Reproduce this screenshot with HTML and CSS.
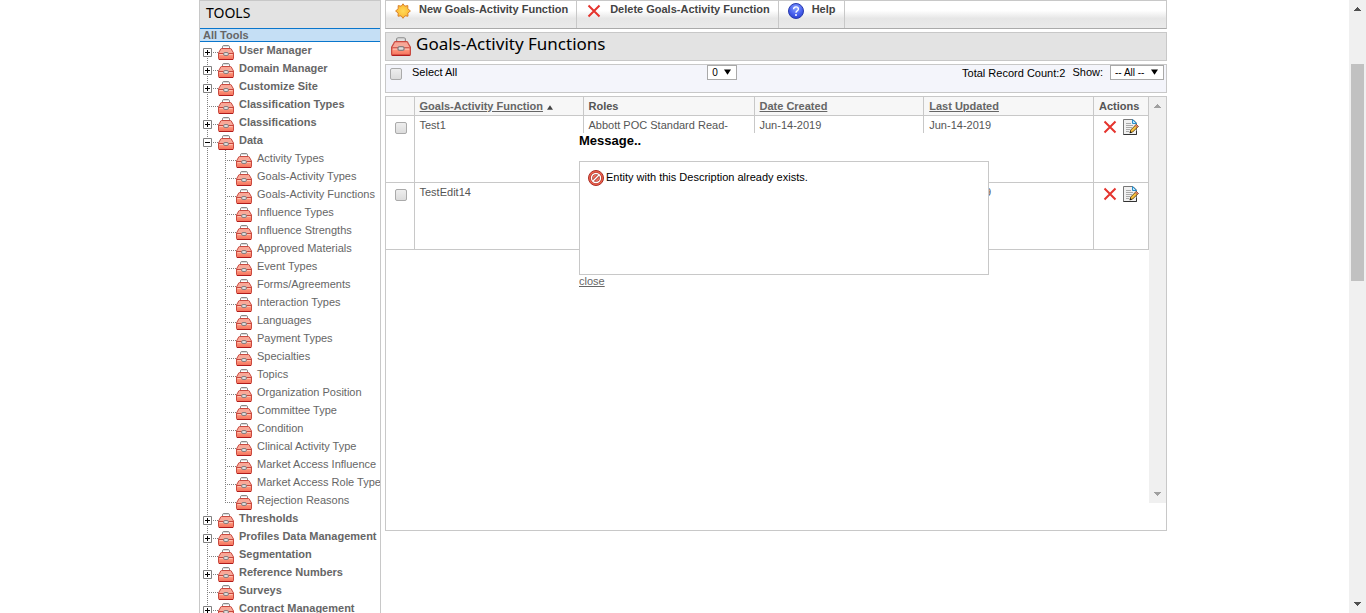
FILE: index.html
```html
<!DOCTYPE html>
<html lang="en">
<head>
<meta charset="utf-8">
<title>Goals-Activity Functions</title>
<link rel="stylesheet" href="styles.css">
</head>
<body>
<svg class="defs" aria-hidden="true">
  <defs>
    <linearGradient id="red" x1="0" y1="0" x2="0" y2="1"><stop offset="0" stop-color="#f9a594"/><stop offset=".4" stop-color="#f7ab9b"/><stop offset=".55" stop-color="#ff9a80"/><stop offset="1" stop-color="#f4705a"/></linearGradient>
    <radialGradient id="blue" cx=".5" cy=".3" r=".7"><stop offset="0" stop-color="#8ba4ff"/><stop offset=".6" stop-color="#4a62ee"/><stop offset="1" stop-color="#2a3fd0"/></radialGradient>
    <radialGradient id="gold"><stop offset="0" stop-color="#ffd95a"/><stop offset="1" stop-color="#fdb92e"/></radialGradient>
    <symbol id="toolbox" viewBox="0 0 16 16">
      <path d="M4.500 5V3Q4.500 1.500 6 1.500H10Q11.500 1.500 11.500 3V5" fill="none" stroke="#8a8a8a"/>
      <path d="M5 2.500H11" stroke="#ddd"/>
      <path d="M3.500 4.500H12.500Q13.300 4.500 13.800 6L15.500 9V14.500Q15.500 15.500 14.500 15.500H1.500Q.5 15.500 .5 14.500V9L2.200 6Q2.700 4.500 3.500 4.500Z" fill="url(#red)" stroke="#c94a40"/>
      <path d="M1 15.500H15" stroke="#b01c1c"/>
      <path d="M1 9.500H15" stroke="#c9473d"/><path d="M1.500 10.500H14.500" stroke="#ffc0b0"/>
      <rect x="5.500" y="8.500" width="5" height="3" rx="1.500" fill="#ddd" stroke="#8a7c7c"/>
    </symbol>
    <symbol id="cross" viewBox="0 0 16 16"><path d="M2.500 2.500L13.500 13.500M13.500 2.500L2.500 13.500" stroke="#e5342e" stroke-width="2" fill="none"/></symbol>
    <symbol id="star" viewBox="0 0 16 16"><path d="M8 .8L9.800 3.200L12.800 2.600L12.800 5.700L15.400 8L12.800 10L13 13.200L9.900 12.800L8 15.300L6.100 12.800L3 13.200L3.200 10L.6 8L3.200 5.700L3.200 2.600L6.200 3.200Z" fill="url(#gold)" stroke="#d9822b" stroke-linejoin="round"/></symbol>
    <symbol id="help" viewBox="0 0 16 16"><circle cx="8" cy="8" r="7.500" fill="url(#blue)" stroke="#2a3cae"/><path d="M5.600 6.200Q5.700 3.900 8 3.900T10.400 6Q10.400 7.100 9.200 7.800T8 9.800" fill="none" stroke="#fff" stroke-width="1.400"/><circle cx="8" cy="12" r="1" fill="#fff"/></symbol>
    <symbol id="deny" viewBox="0 0 16 16"><circle cx="8" cy="8" r="7.500" fill="#f0614d" stroke="#a83028"/><circle cx="8" cy="8" r="4.500" fill="#ee7261" stroke="#a02a20" stroke-width="2.600"/><path d="M5 11L11 5" stroke="#a02a20" stroke-width="2.600"/><circle cx="8" cy="8" r="4.500" fill="none" stroke="#fff" stroke-width="1.400"/><path d="M5 11L11 5" stroke="#fff" stroke-width="1.400"/></symbol>
    <symbol id="edit" viewBox="0 0 16 16">
      <path d="M.5 .5H10L13.500 4V15.500H.5Z" fill="#f1f1f1" stroke="#777"/><path d="M.5 15.500H13.500V12" fill="none" stroke="#333"/>
      <path d="M9.500 .5V4.500H13.500Z" fill="#bfe6fb" stroke="#2b8fcb"/>
      <path d="M3 4.500H8M3 6.500H10M3 8.500H9M3 10.500H7M3 12.500H6" stroke="#aaa"/>
      <path d="M7 13.800L7.700 11L13.200 5.500L15.200 7.500L9.700 13Z" fill="#f9c13c" stroke="#5b4213" stroke-width=".9"/>
      <path d="M12.200 6.500L13.300 5.400L15.300 7.400L14.200 8.500Z" fill="#e88974" stroke="#8a3a2a" stroke-width=".5"/><path d="M6.600 14.200L7.400 12L8.800 13.400Z" fill="#111"/>
    </symbol>
    <symbol id="plus" viewBox="0 0 9 9"><path d="M.5 .5H8.500V8.500H.5Z" fill="#fff" stroke="#808080"/><path d="M2 4.500H7M4.500 2V7" stroke="#000"/></symbol>
    <symbol id="minus" viewBox="0 0 9 9"><path d="M.5 .5H8.500V8.500H.5Z" fill="#fff" stroke="#808080"/><path d="M2 4.500H7" stroke="#000"/></symbol>
    <symbol id="up" viewBox="0 0 7 4"><path d="M3 0H4V1H5V2H6V3H7V4H0V3H1V2H2V1H3Z"/></symbol>
    <symbol id="down" viewBox="0 0 7 4"><path d="M0 0H7V1H6V2H5V3H4V4H3V3H2V2H1V1H0Z"/></symbol>
    <symbol id="caret" viewBox="0 0 8 6"><path d="M0 0H8L4 6Z"/></symbol>
  </defs>
</svg>

<div class="page">
  <nav class="sidebar" aria-label="Tools">
    <h2 class="sidebar-title">TOOLS</h2>
    <a class="all-tools" href="#">All Tools</a>
    <ul class="tree">
      <li><button class="toggle" aria-label="Expand"><svg><use href="#plus"/></svg></button><a href="#"><svg class="icon"><use href="#toolbox"/></svg>User Manager</a></li>
      <li><button class="toggle" aria-label="Expand"><svg><use href="#plus"/></svg></button><a href="#"><svg class="icon"><use href="#toolbox"/></svg>Domain Manager</a></li>
      <li><button class="toggle" aria-label="Expand"><svg><use href="#plus"/></svg></button><a href="#"><svg class="icon"><use href="#toolbox"/></svg>Customize Site</a></li>
      <li><a href="#"><svg class="icon"><use href="#toolbox"/></svg>Classification Types</a></li>
      <li><button class="toggle" aria-label="Expand"><svg><use href="#plus"/></svg></button><a href="#"><svg class="icon"><use href="#toolbox"/></svg>Classifications</a></li>
      <li><button class="toggle" aria-label="Collapse"><svg><use href="#minus"/></svg></button><a href="#"><svg class="icon"><use href="#toolbox"/></svg>Data</a>
        <ul class="subtree">
          <li><a href="#"><svg class="icon"><use href="#toolbox"/></svg>Activity Types</a></li>
          <li><a href="#"><svg class="icon"><use href="#toolbox"/></svg>Goals-Activity Types</a></li>
          <li><a href="#"><svg class="icon"><use href="#toolbox"/></svg>Goals-Activity Functions</a></li>
          <li><a href="#"><svg class="icon"><use href="#toolbox"/></svg>Influence Types</a></li>
          <li><a href="#"><svg class="icon"><use href="#toolbox"/></svg>Influence Strengths</a></li>
          <li><a href="#"><svg class="icon"><use href="#toolbox"/></svg>Approved Materials</a></li>
          <li><a href="#"><svg class="icon"><use href="#toolbox"/></svg>Event Types</a></li>
          <li><a href="#"><svg class="icon"><use href="#toolbox"/></svg>Forms/Agreements</a></li>
          <li><a href="#"><svg class="icon"><use href="#toolbox"/></svg>Interaction Types</a></li>
          <li><a href="#"><svg class="icon"><use href="#toolbox"/></svg>Languages</a></li>
          <li><a href="#"><svg class="icon"><use href="#toolbox"/></svg>Payment Types</a></li>
          <li><a href="#"><svg class="icon"><use href="#toolbox"/></svg>Specialties</a></li>
          <li><a href="#"><svg class="icon"><use href="#toolbox"/></svg>Topics</a></li>
          <li><a href="#"><svg class="icon"><use href="#toolbox"/></svg>Organization Position</a></li>
          <li><a href="#"><svg class="icon"><use href="#toolbox"/></svg>Committee Type</a></li>
          <li><a href="#"><svg class="icon"><use href="#toolbox"/></svg>Condition</a></li>
          <li><a href="#"><svg class="icon"><use href="#toolbox"/></svg>Clinical Activity Type</a></li>
          <li><a href="#"><svg class="icon"><use href="#toolbox"/></svg>Market Access Influence</a></li>
          <li><a href="#"><svg class="icon"><use href="#toolbox"/></svg>Market Access Role Type</a></li>
          <li><a href="#"><svg class="icon"><use href="#toolbox"/></svg>Rejection Reasons</a></li>
        </ul>
      </li>
      <li><button class="toggle" aria-label="Expand"><svg><use href="#plus"/></svg></button><a href="#"><svg class="icon"><use href="#toolbox"/></svg>Thresholds</a></li>
      <li><button class="toggle" aria-label="Expand"><svg><use href="#plus"/></svg></button><a href="#"><svg class="icon"><use href="#toolbox"/></svg>Profiles Data Management</a></li>
      <li><a href="#"><svg class="icon"><use href="#toolbox"/></svg>Segmentation</a></li>
      <li><button class="toggle" aria-label="Expand"><svg><use href="#plus"/></svg></button><a href="#"><svg class="icon"><use href="#toolbox"/></svg>Reference Numbers</a></li>
      <li><a href="#"><svg class="icon"><use href="#toolbox"/></svg>Surveys</a></li>
      <li><button class="toggle" aria-label="Expand"><svg><use href="#plus"/></svg></button><a href="#"><svg class="icon"><use href="#toolbox"/></svg>Contract Management</a></li>
    </ul>
  </nav>

  <main class="content">
    <div class="toolbar">
      <button class="tool"><svg class="icon"><use href="#star"/></svg>New Goals-Activity Function</button>
      <button class="tool"><svg class="icon"><use href="#cross"/></svg>Delete Goals-Activity Function</button>
      <button class="tool"><svg class="icon"><use href="#help"/></svg>Help</button>
    </div>

    <div class="heading">
      <svg class="heading-icon"><use href="#toolbox"/></svg>
      <h1>Goals-Activity Functions</h1>
    </div>

    <div class="filters">
      <label class="select-all"><input class="check" type="checkbox">Select All</label>
      <span class="pick"><select aria-label="Page"><option>0</option></select><svg><use href="#caret"/></svg></span>
      <div class="records">
        <span class="count">Total Record Count:2</span>
        <label for="show">Show:</label>
        <span class="pick pick-wide"><select id="show"><option>-- All --</option></select><svg><use href="#caret"/></svg></span>
      </div>
    </div>

    <section class="grid">
      <div class="grid-body">
        <table>
          <colgroup><col class="c-check"><col class="c-name"><col class="c-roles"><col><col><col class="c-actions"></colgroup>
          <thead>
            <tr><th></th><th><a href="#">Goals-Activity Function</a><svg class="sort"><use href="#caret"/></svg></th><th>Roles</th><th><a href="#">Date Created</a></th><th><a href="#">Last Updated</a></th><th>Actions</th></tr>
          </thead>
          <tbody>
            <tr><td><input class="check" type="checkbox" aria-label="Test1"></td><td>Test1</td><td>Abbott POC Standard Read-</td><td>Jun-14-2019</td><td>Jun-14-2019</td>
              <td><div class="actions"><button aria-label="Delete"><svg class="icon"><use href="#cross"/></svg></button><button aria-label="Edit"><svg class="icon"><use href="#edit"/></svg></button></div></td></tr>
            <tr><td><input class="check" type="checkbox" aria-label="TestEdit14"></td><td>TestEdit14</td><td></td><td>Jun-14-2019</td><td>Jun-14-2019</td>
              <td><div class="actions"><button aria-label="Delete"><svg class="icon"><use href="#cross"/></svg></button><button aria-label="Edit"><svg class="icon"><use href="#edit"/></svg></button></div></td></tr>
          </tbody>
        </table>
        <div class="scroll" aria-hidden="true"><svg><use href="#up"/></svg><svg><use href="#down"/></svg></div>
      </div>

      <div class="message" role="dialog" aria-labelledby="message-title">
        <h2 id="message-title">Message..</h2>
        <div class="message-box"><svg class="icon"><use href="#deny"/></svg><p>Entity with this Description already exists.</p></div>
        <a href="#">close</a>
      </div>
    </section>
  </main>
</div>

<div class="scroll page-scroll" aria-hidden="true"><svg><use href="#up"/></svg><div class="thumb"></div><svg><use href="#down"/></svg></div>
</body>
</html>
```
FILE: styles.css
```css
* { box-sizing: border-box; }

body {
  margin: 0;
  height: 100vh;
  overflow: hidden;
  background: #fff;
  color: #555;
  font: 11px/16px "Liberation Sans", Arial, sans-serif;
}

h1, h2, p, ul { margin: 0; padding: 0; }
ul { list-style: none; }
a { color: #666; }
svg { display: block; flex: none; }

button {
  margin: 0;
  padding: 0;
  border: 0;
  background: none;
  color: inherit;
  font: inherit;
}

.defs { position: absolute; width: 0; height: 0; }
.icon { width: 16px; height: 16px; }

.page {
  display: flex;
  gap: 4px;
  max-width: 968px;
  height: 100%;
  margin: 0 auto;
}

/* Sidebar */

.sidebar {
  flex: 0 0 182px;
  overflow: hidden;
  border: 1px solid #c8c8c8;
  border-bottom: 0;
}

.sidebar-title {
  height: 27px;
  padding: 0 6px;
  background: #e3e3e3;
  color: #000;
  font: 14px/24px "Trebuchet MS", "Noto Sans", sans-serif;
}

.all-tools {
  display: block;
  padding: 0 3px;
  border: 1px solid #0a76cc;
  border-width: 1px 0;
  background: #c5dff5;
  font-weight: bold;
  line-height: 12px;
  text-decoration: none;
}

.tree { font-weight: bold; }
.subtree { padding-left: 18px; font-weight: normal; }

.tree li {
  position: relative;
  background: repeating-linear-gradient(#808080 0 1px, transparent 1px 2px) 7px 0 / 1px 100% no-repeat;
}

.tree > li:first-child { background-position: 7px 10px; }
.subtree > li:last-child { background-size: 1px 10px; }

.tree a {
  display: flex;
  gap: 5px;
  height: 18px;
  padding-left: 18px;
  background: repeating-linear-gradient(90deg, #808080 0 1px, transparent 1px 2px) 7px 10px / 11px 1px no-repeat;
  text-decoration: none;
  white-space: nowrap;
}

.tree .icon { margin-top: 2px; }
.toggle { position: absolute; top: 6px; left: 3px; }
.toggle svg { width: 9px; height: 9px; }

/* Main column */

.content {
  display: flex;
  flex: 1;
  flex-direction: column;
  gap: 3px;
  min-width: 0;
}

.toolbar {
  display: flex;
  height: 29px;
  border: 1px solid #c8c8c8;
  border-bottom-color: #aaa;
  background: linear-gradient(#fff 35%, #e6e6e6 65%, #eaeaea);
}

.tool {
  display: flex;
  gap: 8px;
  padding: 0 8px 0 9px;
  border-right: 1px solid #c8c8c8;
  color: #444;
  font-weight: bold;
}

.tool .icon { margin-top: 2px; }

.heading {
  display: flex;
  gap: 5px;
  height: 29px;
  padding: 0 5px;
  border: 1px solid #c8c8c8;
  background: #e3e3e3;
}

.heading-icon { width: 20px; height: 20px; margin-top: 3px; }

.heading h1 {
  color: #000;
  font: 17px/22px "Trebuchet MS", "Noto Sans", sans-serif;
}

.filters {
  display: grid;
  grid-template-columns: 41% auto 1fr;
  align-items: start;
  height: 29px;
  padding: 0 2px 0 4px;
  border: 1px solid #c8c8c8;
  background: #f4f5fb;
  color: #000;
}

.filters label { line-height: 14px; }
.select-all { display: flex; gap: 10px; }
.select-all .check { margin-top: 3px; }
.records { display: flex; justify-content: flex-end; gap: 7px; }

.check {
  display: block;
  width: 12px;
  height: 12px;
  margin: 0;
  border: 1px solid #aaa;
  border-radius: 2px;
  appearance: none;
  background: linear-gradient(#eee, #dcdcdc);
}

.pick { position: relative; width: 30px; }
.pick-wide { width: 54px; }

.pick select {
  display: block;
  width: 100%;
  height: 15px;
  padding: 0 4px;
  border: 1px solid #a9a9a9;
  border-radius: 0;
  appearance: none;
  background: #fff;
  color: #000;
  font: 10px/13px "Liberation Sans", Arial, sans-serif;
}

.pick svg {
  position: absolute;
  top: 4px;
  right: 6px;
  width: 7px;
  height: 6px;
  pointer-events: none;
}

/* Records table */

.grid {
  position: relative;
  height: 435px;
  border: 1px solid #c8c8c8;
}

.grid-body {
  display: flex;
  align-items: flex-start;
  height: 406px;
}

table {
  flex: 1;
  width: 100%;
  min-width: 0;
  border-collapse: collapse;
  table-layout: fixed;
}

.c-check { width: 28px; }
.c-name { width: 169px; }
.c-roles { width: 171px; }
.c-actions { width: 55px; }

th, td {
  padding: 1px 5px 0;
  border: 1px solid #c8c8c8;
  text-align: left;
  vertical-align: top;
}

tr > :first-child { border-left: 0; }

th {
  height: 18px;
  border-top: 0;
  background: #f7f7f7;
  white-space: nowrap;
}

td { height: 67px; }
td .check { margin: 5px 0 0 4px; }

.sort {
  display: inline-block;
  width: 6px;
  height: 5px;
  margin-left: 4px;
  fill: #444;
  transform: rotate(180deg);
}

.actions { display: flex; gap: 5px; padding: 2px 3px; }

.scroll {
  display: flex;
  flex: 0 0 17px;
  flex-direction: column;
  align-items: center;
  justify-content: space-between;
  align-self: stretch;
  padding: 7px 0;
  background: #f0f0f0;
  fill: #a0a0a0;
}

.scroll svg { width: 7px; height: 4px; }

.page-scroll {
  position: fixed;
  inset: 0 0 0 auto;
  width: 17px;
  fill: #505050;
}

.thumb {
  width: 13px;
  height: 217px;
  margin: 53px 0 auto;
  background: #c1c1c1;
}

/* Message dialog */

.message {
  position: absolute;
  top: 36px;
  left: 193px;
  width: 410px;
  background: #fff;
}

.message h2 {
  color: #000;
  font-size: 13px;
  line-height: 16px;
}

.message-box {
  display: flex;
  gap: 2px;
  min-height: 114px;
  margin-top: 12px;
  padding: 8px;
  border: 1px solid #c8c8c8;
  color: #000;
}

.message-box p { line-height: 14px; }
.message > a { display: block; line-height: 12px; }
```
